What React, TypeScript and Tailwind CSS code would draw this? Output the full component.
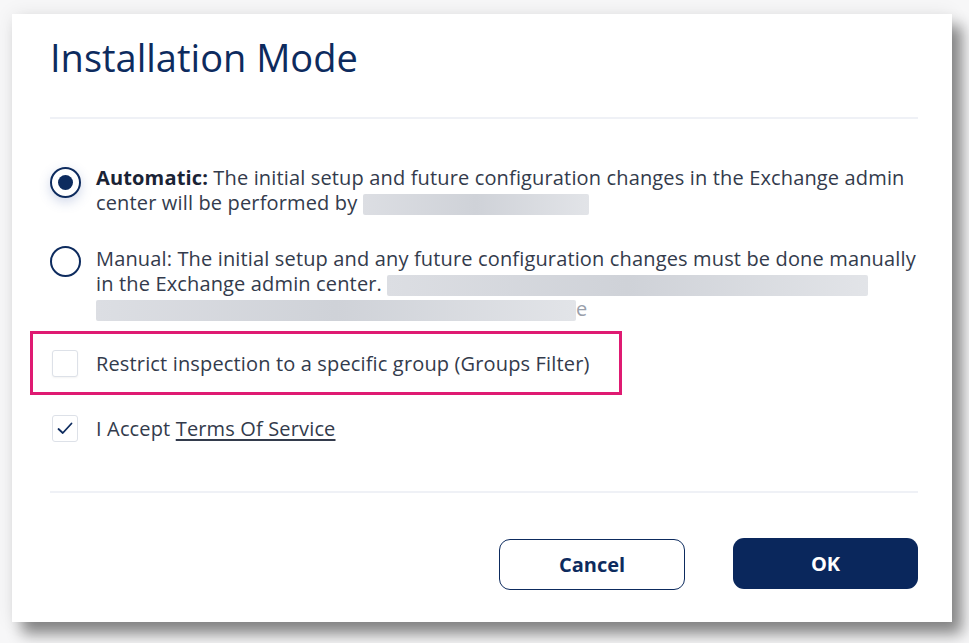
import React from 'react';

const Blur: React.FC<{ w: number }> = ({ w }) => (
  <span
    className="inline-block h-[21px] align-middle rounded-[2px] bg-gradient-to-r from-[#dcdee3] via-[#cfd2d8] to-[#e2e4e8] blur-[0.6px]"
    style={{ width: w }}
  />
);

const App: React.FC = () => {
  return (
    <div className="w-[969px] h-[643px] bg-[#f7f7f8] overflow-hidden font-['Open_Sans',sans-serif]">
      <div className="ml-[12px] mt-[14px] w-[940px] h-[608px] bg-white flex flex-col pl-[38px] pr-[34px] shadow-[10px_12px_14px_rgba(0,0,0,0.45),0_0_18px_rgba(0,0,0,0.08)]">
        {/* header */}
        <h1 className="mt-[22px] h-[42px] leading-[42px] text-[38px] font-normal text-[#0d2b5e]">
          Installation Mode
        </h1>
        <div className="mt-[39px] h-[2px] bg-[#eff1f6]" />

        {/* options */}
        <div className="mt-[46px] flex items-start">
          <div className="mt-[2px] w-[31px] h-[31px] rounded-full border-[2.5px] border-[#0d2b5e] flex items-center justify-center shadow-[0_4px_12px_rgba(70,100,170,0.25)]">
            <div className="w-[15px] h-[15px] rounded-full bg-[#0d2b5e]" />
          </div>
          <div className="ml-[15px] text-[20px] leading-[25px] tracking-[0.15px] text-[#333b4c] whitespace-nowrap">
            <div>
              <span className="font-bold text-[#1a2335]">Automatic:</span> The initial setup and future configuration changes in the Exchange admin
            </div>
            <div>
              center will be performed by <Blur w={226} />
            </div>
          </div>
        </div>

        <div className="mt-[31px] flex items-start">
          <div className="w-[31px] h-[31px] rounded-full border-[2.5px] border-[#0d2b5e]" />
          <div className="ml-[15px] text-[20px] leading-[25px] tracking-[0.15px] text-[#333b4c] whitespace-nowrap">
            <div>Manual: The initial setup and any future configuration changes must be done manually</div>
            <div>
              in the Exchange admin center. <Blur w={481} />
            </div>
            <div>
              <Blur w={480} />
              <span className="text-[#9aa0ab]">e</span>
            </div>
          </div>
        </div>

        {/* groups filter */}
        <div className="mt-[10px] -ml-[20px] w-[592px] h-[64px] border-[3px] border-[#df1a72] flex items-center pl-[19px]">
          <div className="w-[26px] h-[27px] rounded-[3px] border-[1.5px] border-[#dde1e8] bg-white shadow-[0_1px_2px_rgba(0,0,0,0.05)]" />
          <span className="ml-[18px] text-[20px] leading-[27px] tracking-[0.15px] text-[#333b4c]">
            Restrict inspection to a specific group (Groups Filter)
          </span>
        </div>

        <div className="mt-[20px] h-[27px] flex items-center">
          <div className="ml-[2px] w-[26px] h-[27px] rounded-[3px] border-[1.5px] border-[#dde1e8] bg-white flex items-center justify-center">
            <svg width="16" height="13" viewBox="0 0 16 13" fill="none">
              <path d="M1.5 7 L5.8 11 L14.5 1.5" stroke="#0d2b5e" strokeWidth="1.8" strokeLinecap="round" strokeLinejoin="round" />
            </svg>
          </div>
          <span className="ml-[18px] text-[20px] leading-[27px] tracking-[0.15px] text-[#333b4c]">
            I Accept <span className="underline underline-offset-[3px]">Terms Of Service</span>
          </span>
        </div>

        <div className="mt-[49px] h-[2px] bg-[#eff1f6]" />

        {/* footer */}
        <div className="mt-[46px] flex justify-end gap-[48px]">
          <button className="w-[186px] h-[51px] rounded-[11px] border-[1.5px] border-[#0d2b5e] bg-white text-[20px] font-bold text-[#0d2b5e]">
            Cancel
          </button>
          <button className="-mt-[1px] w-[185px] h-[51px] rounded-[11px] bg-[#0a275c] text-[20px] font-bold text-white">
            OK
          </button>
        </div>
      </div>
    </div>
  );
};

export default App;
